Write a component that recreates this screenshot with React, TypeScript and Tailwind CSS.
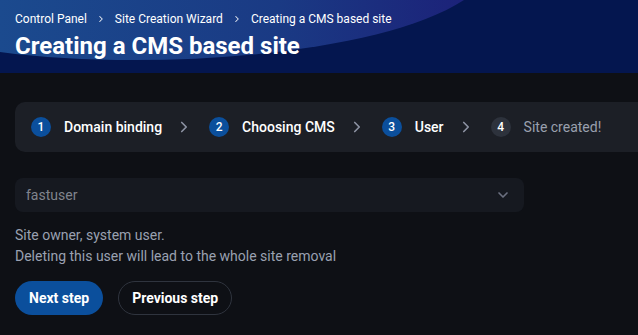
import { ChevronDown, ChevronRight } from "lucide-react";

const steps = [
    { n: 1, label: "Domain binding", done: true },
    { n: 2, label: "Choosing CMS", done: true },
    { n: 3, label: "User", done: true },
    { n: 4, label: "Site created!", done: false },
];

const crumbs = ["Control Panel", "Site Creation Wizard", "Creating a CMS based site"];

function Header() {
    return (
        <div className="relative h-[73px] overflow-hidden bg-[#04164f]">
            <svg
                className="absolute inset-0 h-full w-full"
                viewBox="0 0 638 73"
                preserveAspectRatio="none"
            >
                <defs>
                    <linearGradient id="hdr" x1="0" y1="0" x2="1" y2="0">
                        <stop offset="0" stopColor="#1b4a8e" />
                        <stop offset="0.6" stopColor="#1a3a84" />
                        <stop offset="1" stopColor="#1c2279" />
                    </linearGradient>
                </defs>
                <path d="M0,0 H464 C380,55 150,72 0,52 Z" fill="url(#hdr)" />
            </svg>
            <div className="relative px-[15px] pt-[11px] text-white">
                <div className="flex items-center text-[12px] leading-[16px]">
                    {crumbs.map((c, i) => (
                        <div key={c} className="flex items-center">
                            {i > 0 && (
                                <ChevronRight
                                    size={10}
                                    strokeWidth={2.5}
                                    className="mx-[9px] text-white/90"
                                />
                            )}
                            <span>{c}</span>
                        </div>
                    ))}
                </div>
                <h1 className="mt-[4px] text-[24px] font-bold leading-[30px]">
                    Creating a CMS based site
                </h1>
            </div>
        </div>
    );
}

function Stepper() {
    return (
        <div className="ml-[15px] flex h-[50px] w-[700px] items-center rounded-l-[10px] bg-[#1c1f26] pl-[16px]">
            {steps.map((s, i) => (
                <div key={s.n} className="flex items-center">
                    {i > 0 && (
                        <ChevronRight
                            size={18}
                            strokeWidth={2.2}
                            className="ml-[13px] mr-[16px] text-[#8d93a3]"
                        />
                    )}
                    <span
                        className={
                            s.done
                                ? "flex h-[20px] w-[20px] items-center justify-center rounded-full bg-[#0b4f9c] text-[12px] font-medium text-white"
                                : "flex h-[20px] w-[20px] items-center justify-center rounded-full bg-[#2d323c] text-[12px] font-medium text-white"
                        }
                    >
                        {s.n}
                    </span>
                    <span
                        className={
                            s.done
                                ? "ml-[13px] text-[14px] font-medium text-white"
                                : "ml-[13px] text-[14px] text-[#9aa0ae]"
                        }
                    >
                        {s.label}
                    </span>
                </div>
            ))}
        </div>
    );
}

export default function App() {
    return (
        <div className="h-[335px] w-[638px] overflow-hidden bg-[#0e1015] font-['Roboto',sans-serif]">
            <Header />
            <div className="pt-[29px]">
                <Stepper />
                <div className="px-[15px]">
                    <div className="mt-[26px] flex h-[34px] w-[509px] items-center justify-between rounded-[8px] bg-[#161920] pl-[11px] pr-[13px]">
                        <span className="text-[14px] text-[#80848d]">fastuser</span>
                        <ChevronDown size={16} strokeWidth={2.5} className="text-[#6b7080]" />
                    </div>
                    <div className="mt-[13px] text-[14px] leading-[21px] text-[#9aa1b1]">
                        <p>Site owner, system user.</p>
                        <p>Deleting this user will lead to the whole site removal</p>
                    </div>
                    <div className="mt-[14px] flex gap-[15px]">
                        <button className="h-[34px] rounded-full bg-[#0b4f9c] px-[14px] text-[14px] font-bold text-white">
                            Next step
                        </button>
                        <button className="h-[34px] rounded-full border border-[#2f343e] px-[13px] text-[14px] font-bold text-white">
                            Previous step
                        </button>
                    </div>
                </div>
            </div>
        </div>
    );
}
